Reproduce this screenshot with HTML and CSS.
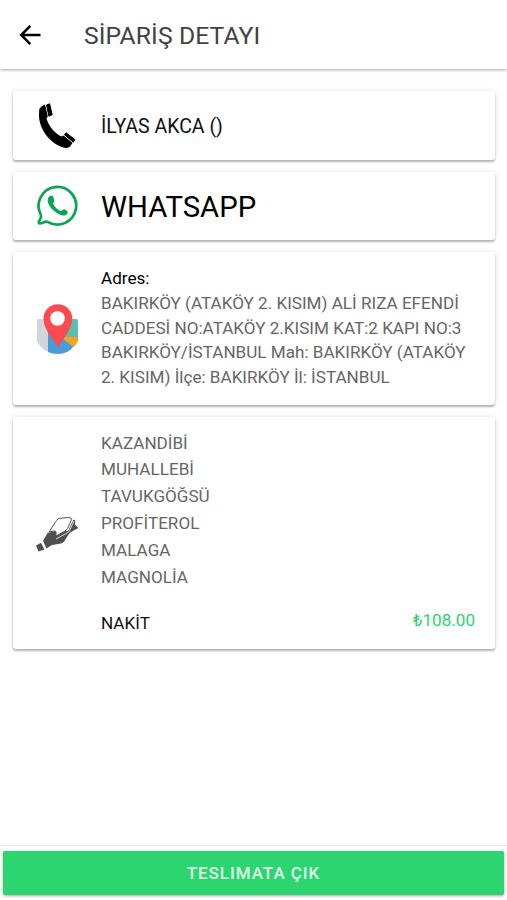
FILE: index.html
```html
<!DOCTYPE html>
<html lang="tr">
<head>
<meta charset="utf-8">
<title>Sipariş Detayı</title>
<link rel="stylesheet" href="styles.css">
</head>
<body>
<header class="bar">
  <svg class="back" width="24" height="24" viewBox="0 0 24 24" fill="none" stroke="#000" stroke-width="2.5"><path d="M22.5 12H3M12.300 2.800 3.200 12l9.100 9.200"/></svg>
  <h1>SİPARİŞ DETAYI</h1>
</header>
<main>
  <section class="card">
    <div class="icon"><svg width="44" height="48" viewBox="0 0 44 48"><path d="M3.300 7Q5 3.500 9 2.500L11.800 14.500 10.500 16.500C12.500 24 19 31.500 25.500 34.500L27.500 33.500 36.500 41 34 44.500Q31.500 47.200 26 45C12 40 2.500 25 3 12Z"/><path d="M10.500 3 13.600 1.800 16.200 12.700 12.900 14.200ZM28.400 32.700 30 30.800 39 37.600 37.300 40.200Z" stroke="#000" stroke-linejoin="round"/></svg></div>
    <div class="content name">İLYAS AKCA ()</div>
  </section>
  <section class="card">
    <div class="icon"><svg width="44" height="44" viewBox="0 0 44 44"><path d="M4.700 30.500A18.800 18.800 0 1 1 12 38.100Q9.500 36.800 7.500 38.500L4 39.500Q2.200 39.500 3 37.500L4.700 34Q5.300 32.500 4.700 30.500Z" fill="none" stroke="#08a552" stroke-width="2.700" stroke-linejoin="round"/><path d="M13.500 12.300Q16.300 10.500 17.500 13.200L18.200 16.500Q18.400 18 16.900 19.500 19.400 24.500 24.800 27.200 27 25 28.500 25.300L31.300 27Q32.500 30 29.500 31.300 24.800 32.300 18.800 27.600 12 22.200 11.600 16.500 11.700 13.700 13.500 12.300Z" fill="#08a552"/></svg></div>
    <div class="content whatsapp">WHATSAPP</div>
  </section>
  <section class="card address">
    <div class="icon"><svg width="44" height="52" viewBox="0 0 44 52"><path d="M2 15H12V48Q4 44 1 37V17Q1 15 2 15Z" fill="#d3d4dc"/><path d="M12 15H33L38 42Q32 50 22 50 16 50 12 48Z" fill="#459edb"/><path d="M22 15H40Q42 15 42 17V33H27Z" fill="#59bfb0"/><path d="M25 33H42V37Q40 41 37.500 43Z" fill="#f6a51b"/><path d="M22 44C17 34 7.500 26 7.500 14.500A14.300 14.300 0 0 1 36.200 14.500C36.200 26 27 34 22 44Z" fill="#fb4a50"/><circle cx="21.500" cy="14.500" r="7.300" fill="#fff"/></svg></div>
    <div class="content">
      <h2>Adres:</h2>
      <p>BAKIRKÖY (ATAKÖY 2. KISIM) ALİ RIZA EFENDİ<br>CADDESİ NO:ATAKÖY 2.KISIM KAT:2 KAPI NO:3<br>BAKIRKÖY/İSTANBUL Mah: BAKIRKÖY (ATAKÖY<br>2. KISIM) İlçe: BAKIRKÖY İl: İSTANBUL</p>
    </div>
  </section>
  <section class="card order">
    <div class="icon"><svg width="44" height="40" viewBox="0 0 44 40"><path d="M7 27 11.500 19 19 17 32 17 37.500 5.500 39.300 6.500 39 10.500 42.500 14 34 18.500 28 27.500Q27 29 25 29.500L16 31 10.500 34.500Z" fill="#505050"/><path d="M13 18 20.500 6.500Q21.800 4.300 24 4.200L33 3.500Q36 3.500 35.300 6L31.500 14.500Q31 16 29 17L21 21.500 19.500 21.500Q21.500 17 18 17Z" fill="#fff" stroke="#555" stroke-width="1"/><path d="m20 25 11-6Q33 18 33.500 16.500L38 7" fill="none" stroke="#fff" stroke-width=".8"/><path d="M0 31.500 5 28.700 8.500 35.500 2.500 37.500Z" fill="#505050"/></svg></div>
    <div class="content">
      <ul>
        <li>KAZANDİBİ</li><li>MUHALLEBİ</li><li>TAVUKGÖĞSÜ</li><li>PROFİTEROL</li><li>MALAGA</li><li>MAGNOLİA</li>
      </ul>
      <div class="total"><span>NAKİT</span><span class="price">₺108.00</span></div>
    </div>
  </section>
</main>
<footer><button>TESLIMATA ÇIK</button></footer>
</body>
</html>
```
FILE: styles.css
```css
* { box-sizing: border-box; }
body {
  margin: 0;
  height: 900px;
  display: flex;
  flex-direction: column;
  overflow: hidden;
  background: #fff;
  color: #111;
  font-family: Roboto, "Liberation Sans", sans-serif;
}
h1, h2, p, ul { margin: 0; padding: 0; font-weight: 400; }
.bar {
  height: 69px;
  flex: none;
  display: flex;
  align-items: center;
  padding-left: 18px;
  box-shadow: 0 1px 3px rgba(0, 0, 0, .32);
}
.back { margin-top: 1px; }
h1 { margin-left: 42px; padding-top: 2px; font-size: 24.7px; letter-spacing: .1px; color: #424242; }
main {
  flex: 1;
  display: flex;
  flex-direction: column;
  gap: 12px;
  padding: 22px 12px 0 13px;
}
.card {
  flex: none;
  height: 68.6px;
  display: flex;
  align-items: center;
  border-radius: 3px;
  box-shadow: 0 2px 2px rgba(0, 0, 0, .26), 0 0 5px rgba(0, 0, 0, .12);
}
.icon { width: 88px; padding: 1px 0 0 23px; }
.address .icon, .order .icon { padding-top: 3px; }
.icon svg { display: block; }
.content { flex: 1; padding-top: 2px; white-space: nowrap; }
.name { font-size: 19.5px; }
.whatsapp { font-size: 29.3px; color: #000; }
.address { height: 152.6px; }
.address .content, .order .content { padding: 0 0 1px; }
h2 { font-size: 17.1px; line-height: 25px; color: #000; }
p { font-size: 17.1px; line-height: 24.5px; color: #666; }
.order { height: 232px; }
ul { list-style: none; font-size: 17.1px; line-height: 26.9px; color: #666; }
.total {
  display: flex;
  justify-content: space-between;
  margin-top: 20px;
  padding-right: 20px;
  font-size: 17.1px;
  line-height: 24px;
}
.price { color: #2dd36f; margin-top: -3px; }
footer {
  height: 55px;
  flex: none;
  padding: 5px 3px 0;
  border-top: 1px solid #eaeaea;
}
button {
  display: block;
  width: 100%;
  height: 44px;
  border: 0;
  border-radius: 2px;
  background: #2dd570;
  color: #e0ffeb;
  font: 500 17px Roboto, sans-serif;
  letter-spacing: .95px;
  box-shadow: 0 1px 3px rgba(0, 0, 0, .35);
}
```
